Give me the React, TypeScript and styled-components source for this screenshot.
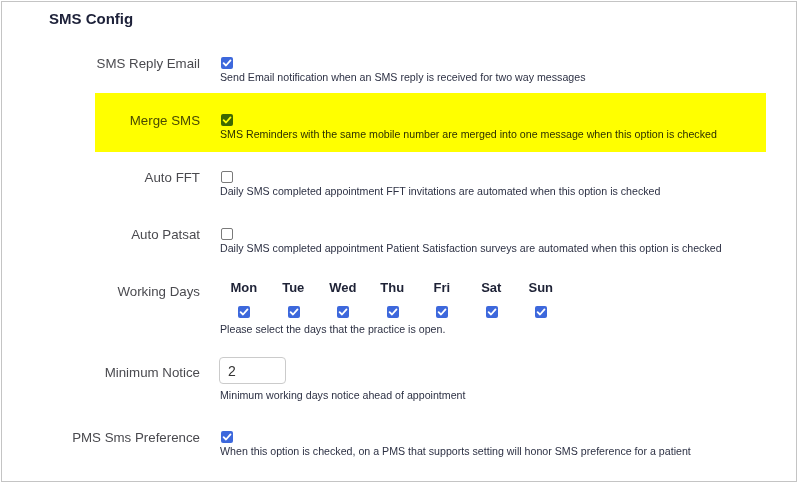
import styled, { createGlobalStyle, css } from "styled-components";

const GlobalStyle = createGlobalStyle`
  html, body {
    margin: 0;
    padding: 0;
    background: #ffffff;
  }
  body {
    font-family: "Liberation Sans", Arial, sans-serif;
  }
`;

const Frame = styled.div`
  box-sizing: border-box;
  width: 796px;
  height: 481px;
  margin: 1px 0 0 1px;
  border: 1px solid #c4c4c4;
  background: #fff;
  overflow: hidden;
`;

const Title = styled.h2`
  margin: 8px 0 10px 47px;
  font-size: 15px;
  line-height: 17px;
  font-weight: 700;
  color: #1d2139;
`;

interface RowProps {
  $highlight?: boolean;
  $pad?: string;
}

const Row = styled.div<RowProps>`
  display: grid;
  grid-template-columns: 198px 1fr;
  column-gap: 20px;
  padding: ${(p) => p.$pad ?? "20px 0 11px"};

  ${(p) =>
    p.$highlight &&
    css`
      grid-template-columns: 105px 1fr;
      margin: -1px 30px -1px 93px;
      padding: 21px 0 12px;
      background: #ffff00;

      & > * {
        mix-blend-mode: multiply;
      }
    `}
`;

const Label = styled.div<{ $top?: number }>`
  padding-top: ${(p) => p.$top ?? 0}px;
  font-size: 13.3px;
  line-height: 14px;
  color: #4a4a4f;
  text-align: right;
  white-space: nowrap;
`;

const Control = styled.div`
  display: flex;
  flex-direction: column;
  align-items: flex-start;
`;

const BoxLine = styled.div`
  height: 14px;
  display: flex;
  align-items: flex-start;
`;

const Help = styled.div<{ $gap?: number }>`
  margin-top: ${(p) => p.$gap ?? 0}px;
  font-size: 10.65px;
  line-height: 12px;
  color: #2d3144;
  white-space: nowrap;
`;

const Box = styled.span<{ $checked: boolean }>`
  box-sizing: border-box;
  display: inline-flex;
  align-items: center;
  justify-content: center;
  width: 12px;
  height: 12px;
  margin-left: 1px;
  border-radius: 2px;
  ${(p) =>
    p.$checked
      ? css`
          background: #3d68dc;
        `
      : css`
          background: #fff;
          border: 1px solid #7a7a7a;
        `}
`;

const Days = styled.div`
  display: grid;
  grid-template-columns: repeat(7, 49.5px);
  row-gap: 11px;
  margin-left: -1px;
`;

const DayName = styled.div`
  font-size: 13px;
  line-height: 15px;
  font-weight: 700;
  color: #1e2236;
  text-align: center;
`;

const DayCell = styled.div`
  display: flex;
  justify-content: center;
  height: 13px;
`;

const NumberInput = styled.input`
  box-sizing: border-box;
  width: 67px;
  height: 27px;
  margin-left: -1px;
  padding: 0 8px;
  border: 1px solid #cbcbcb;
  border-radius: 4px;
  font-family: "Liberation Sans", Arial, sans-serif;
  font-size: 14px;
  color: #333;
  outline: none;
`;

function Check({ checked }: { checked: boolean }) {
  return (
    <Box $checked={checked}>
      {checked && (
        <svg width="10" height="10" viewBox="0 0 10 10">
          <path
            d="M1.6 5.2 L4 7.5 L8.5 2.4"
            fill="none"
            stroke="#fff"
            strokeWidth="1.8"
            strokeLinecap="round"
            strokeLinejoin="round"
          />
        </svg>
      )}
    </Box>
  );
}

interface ToggleRowProps {
  label: string;
  help: string;
  checked: boolean;
  highlight?: boolean;
}

function ToggleRow({ label, help, checked, highlight }: ToggleRowProps) {
  return (
    <Row $highlight={highlight}>
      <Label>{label}</Label>
      <Control>
        <BoxLine>
          <Check checked={checked} />
        </BoxLine>
        <Help>{help}</Help>
      </Control>
    </Row>
  );
}

const days = ["Mon", "Tue", "Wed", "Thu", "Fri", "Sat", "Sun"];

export default function App() {
  return (
    <>
      <GlobalStyle />
      <Frame>
        <Title>SMS Config</Title>
        <ToggleRow
          label="SMS Reply Email"
          checked
          help="Send Email notification when an SMS reply is received for two way messages"
        />
        <ToggleRow
          label="Merge SMS"
          checked
          highlight
          help="SMS Reminders with the same mobile number are merged into one message when this option is checked"
        />
        <ToggleRow
          label="Auto FFT"
          checked={false}
          help="Daily SMS completed appointment FFT invitations are automated when this option is checked"
        />
        <ToggleRow
          label="Auto Patsat"
          checked={false}
          help="Daily SMS completed appointment Patient Satisfaction surveys are automated when this option is checked"
        />
        <Row $pad="15px 0 11px">
          <Label $top={5}>Working Days</Label>
          <Control>
            <Days>
              {days.map((d) => (
                <DayName key={d}>{d}</DayName>
              ))}
              {days.map((d) => (
                <DayCell key={d}>
                  <Check checked />
                </DayCell>
              ))}
            </Days>
            <Help $gap={4}>Please select the days that the practice is open.</Help>
          </Control>
        </Row>
        <Row $pad="11px 0 10px">
          <Label $top={9}>Minimum Notice</Label>
          <Control>
            <NumberInput defaultValue="2" />
            <Help $gap={5}>Minimum working days notice ahead of appointment</Help>
          </Control>
        </Row>
        <ToggleRow
          label="PMS Sms Preference"
          checked
          help="When this option is checked, on a PMS that supports setting will honor SMS preference for a patient"
        />
      </Frame>
    </>
  );
}
